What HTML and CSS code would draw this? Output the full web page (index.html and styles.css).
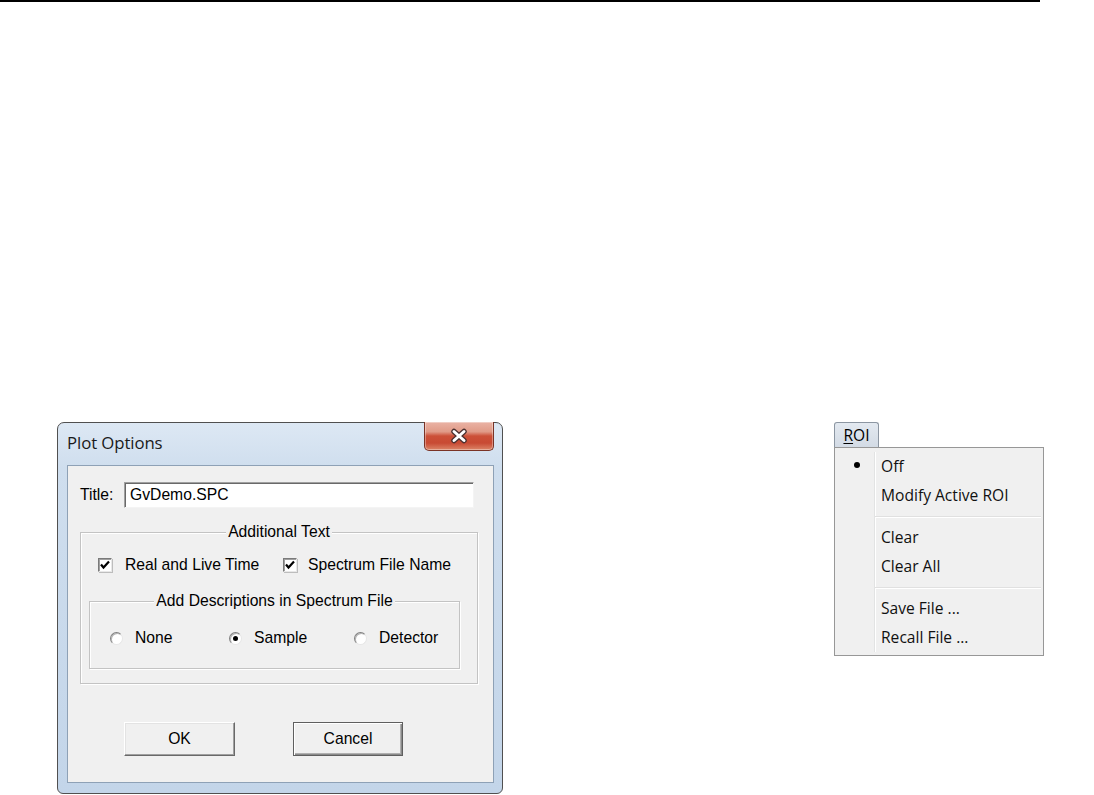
FILE: index.html
```html
<!DOCTYPE html>
<html>
<head>
<meta charset="utf-8">
<link rel="stylesheet" href="styles.css">
</head>
<body>
<div class="topline"></div>
<div class="stage">
  <div class="window">
    <div class="titlebar">
      <span class="wtitle">Plot Options</span>
      <div class="closebtn">
        <svg width="22" height="16" viewBox="0 0 22 16">
          <path d="M6 3.5 L16 12.5 M16 3.5 L6 12.5" stroke="#4a3030" stroke-width="5.5" stroke-linecap="round"/>
          <path d="M6 3.5 L16 12.5 M16 3.5 L6 12.5" stroke="#ffffff" stroke-width="3" stroke-linecap="round"/>
        </svg>
      </div>
    </div>
    <div class="client">
      <div class="titlerow">
        <span class="tlabel">Title:</span>
        <div class="tinput">GvDemo.SPC</div>
      </div>
      <div class="group outer">
        <div class="legend">Additional Text</div>
        <div class="checkrow">
          <div class="citem first"><span class="cbox"><svg width="12" height="12" viewBox="0 0 12 12"><path d="M2 5.5 L4.5 8.5 L10 2.5" fill="none" stroke="#000" stroke-width="2.2"/></svg></span><span class="clabel">Real and Live Time</span></div>
          <div class="citem"><span class="cbox"><svg width="12" height="12" viewBox="0 0 12 12"><path d="M2 5.5 L4.5 8.5 L10 2.5" fill="none" stroke="#000" stroke-width="2.2"/></svg></span><span class="clabel l2">Spectrum File Name</span></div>
        </div>
        <div class="group inner">
          <div class="legend">Add Descriptions in Spectrum File</div>
          <div class="radiorow">
            <div class="ritem r1"><span class="radio"></span><span class="rlabel">None</span></div>
            <div class="ritem r2"><span class="radio on"><span class="dot"></span></span><span class="rlabel">Sample</span></div>
            <div class="ritem"><span class="radio"></span><span class="rlabel">Detector</span></div>
          </div>
        </div>
      </div>
      <div class="btnrow">
        <div class="btn ok">OK</div>
        <div class="btn cancel">Cancel</div>
      </div>
    </div>
  </div>
  <div class="menuwrap">
    <div class="menuhead"><span class="ul">R</span>OI</div>
    <div class="menu">
      <div class="mitem"><span class="gut"><span class="bullet"></span></span><span class="mtext">Off</span></div>
      <div class="mitem"><span class="gut"></span><span class="mtext">Modify Active ROI</span></div>
      <div class="msep"><span class="gut"></span><span class="sline"></span></div>
      <div class="mitem"><span class="gut"></span><span class="mtext">Clear</span></div>
      <div class="mitem"><span class="gut"></span><span class="mtext">Clear All</span></div>
      <div class="msep"><span class="gut"></span><span class="sline"></span></div>
      <div class="mitem"><span class="gut"></span><span class="mtext">Save File ...</span></div>
      <div class="mitem"><span class="gut"></span><span class="mtext">Recall File ...</span></div>
    </div>
  </div>
</div>
</body>
</html>
```

FILE: styles.css
```css
* { box-sizing: border-box; }
html, body { margin: 0; padding: 0; background: #fff; }
body { width: 1094px; height: 795px; overflow: hidden; font-family: "Liberation Sans", Arial, sans-serif; font-size: 15.7px; color: #000; }

.topline { width: 1040px; height: 2px; background: #000; }

.stage { display: flex; align-items: flex-start; padding: 420px 0 0 57px; }

/* window */
.window {
  width: 446px; height: 372px;
  border: 1px solid #505050;
  border-radius: 7px 7px 6px 6px;
  background: linear-gradient(180deg, #dde8f4 0%, #cfdeee 12%, #c3d5e9 100%);
  display: flex; flex-direction: column;
}
.titlebar { height: 42px; display: flex; justify-content: space-between; align-items: flex-start; padding-left: 9px; }
.wtitle { font-family: "Open Sans", "Noto Sans", sans-serif; font-size: 16.8px; line-height: 40px; color: #1a1a1a; letter-spacing: -0.1px; }
.closebtn {
  width: 70px; height: 29px; margin-top: -1px; margin-right: 8px;
  border: 1px solid #7a3326; border-top: none;
  border-radius: 0 0 5px 5px;
  background: linear-gradient(180deg, #eab3a5 0%, #e09a87 35%, #cc5038 50%, #c84a33 75%, #dc8568 100%);
  box-shadow: inset 0 0 0 1px rgba(255,255,255,0.35);
  display: flex; align-items: center; justify-content: center;
}
.client {
  margin: 0 8px 0 9px; height: 318px;
  border: 1px solid #8ea1b6;
  background: #f0f0f0;
}

.titlerow { display: flex; align-items: center; padding: 16px 0 0 12px; }
.tlabel { width: 44px; }
.tinput {
  width: 350px; height: 26px; background: #fff;
  border: 1px solid; border-color: #a0a0a0 #f4f4f4 #f4f4f4 #a0a0a0;
  box-shadow: inset 1px 1px 0 #696969;
  padding-left: 5px; line-height: 23px;
}

.group {
  border: 1px solid #c3c3c3;
  box-shadow: inset 1px 1px 0 #fff, 1px 1px 0 #fff;
}
.group.outer { margin: 24px 0 0 12px; width: 398px; height: 152px; }
.group.inner { margin: 26px 0 0 8px; width: 371px; height: 68px; }
.legend { width: fit-content; margin: -10px auto 0; padding: 0 2px; line-height: 18px; background: #f0f0f0; }

.checkrow { display: flex; align-items: center; height: 20px; margin-top: 14px; padding-left: 17px; }
.citem { display: flex; align-items: center; }
.citem.first { width: 185px; }
.cbox {
  width: 14px; height: 14px; background: #fff;
  border: 1px solid; border-color: #7a7a7a #e8e8e8 #e8e8e8 #7a7a7a;
  box-shadow: inset 1px 1px 0 #a0a0a0, 1px 1px 0 #bdbdbd;
  display: flex; align-items: center; justify-content: center;
}
.clabel { margin-left: 13px; }
.clabel.l2 { margin-left: 11px; }

.radiorow { display: flex; align-items: center; height: 20px; margin-top: 18px; padding-left: 20px; }
.ritem { display: flex; align-items: center; }
.ritem.r1 { width: 119px; }
.ritem.r2 { width: 125px; }
.radio {
  width: 13px; height: 13px; border-radius: 50%;
  background: #fff;
  border: 1px solid; border-color: #7f7f7f #e6e6e6 #e6e6e6 #7f7f7f;
  box-shadow: inset 1px 1px 0 #b4b4b4;
  display: flex; align-items: center; justify-content: center;
}
.dot { width: 5px; height: 5px; border-radius: 50%; background: #000; }
.rlabel { margin-left: 12px; }

.btnrow { display: flex; margin-top: 38px; padding-left: 56px; }
.btn { height: 34px; display: flex; align-items: center; justify-content: center; background: #f0f0f0; }
.btn.ok {
  width: 111px;
  border: 1px solid; border-color: #fff #696969 #696969 #fff;
  box-shadow: inset -1px -1px 0 #a0a0a0, inset 1px 1px 0 #e3e3e3;
}
.btn.cancel {
  width: 110px; margin-left: 58px;
  border: 1px solid #5f5f5f;
  box-shadow: inset 1px 1px 0 #fff, inset -1px -1px 0 #8a8a8a, inset -2px -2px 0 #b0b0b0;
}

/* menu */
.menuwrap { margin-left: 331px; font-family: "Open Sans", "Noto Sans", sans-serif; font-size: 15.6px; }
.menuhead {
  width: 45px; height: 25px;
  border: 1px solid #8c96a2; border-bottom: none; border-radius: 3px 3px 0 0;
  background: linear-gradient(180deg, #e3e9f0, #d3dbe5);
  text-align: center; line-height: 24px;
}
.ul { text-decoration: underline; text-underline-offset: 2px; }
.menu {
  width: 210px; height: 209px;
  border: 1px solid #979797;
  background: #f0f0f0;
  padding: 4px 2px 3px 0;
  display: flex; flex-direction: column;
}
.mitem { display: flex; height: 29px; align-items: stretch; }
.gut {
  width: 40px; flex: none;
  border-right: 1px solid #e2e3e3;
  box-shadow: 1px 0 0 #fff;
  display: flex; align-items: center; justify-content: center;
}
.bullet { width: 6px; height: 6px; border-radius: 50%; background: #000; margin-left: 5px; margin-top: -4px; }
.mtext { padding-left: 6px; line-height: 28px; color: #111; }
.msep { display: flex; height: 13px; align-items: stretch; }
.sline { flex: 1; margin-top: 6px; height: 2px; border-top: 1px solid #e0e0e0; border-bottom: 1px solid #fff; }
```
